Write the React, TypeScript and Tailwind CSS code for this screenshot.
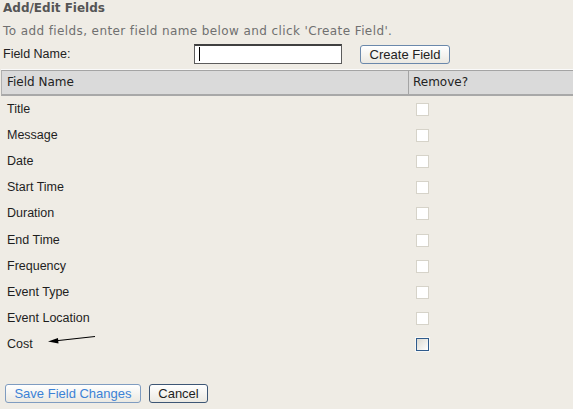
import React from "react";

const fields = [
  "Title",
  "Message",
  "Date",
  "Start Time",
  "Duration",
  "End Time",
  "Frequency",
  "Event Type",
  "Event Location",
  "Cost",
];

const arial = { fontFamily: '"Liberation Sans", Arial, sans-serif' };
const verdana = { fontFamily: '"DejaVu Sans", Verdana, sans-serif' };

function Checkbox({ active }: { active?: boolean }) {
  if (active) {
    return (
      <div className="w-[13px] h-[13px] border border-[#2f5b8c] bg-gradient-to-br from-[#dcdad2] to-white shadow-[0_0_0_1px_#f8f8f6]" />
    );
  }
  return <div className="w-[13px] h-[13px] border border-[#d6d3c9] bg-white" />;
}

export default function App() {
  return (
    <div className="relative w-[573px] h-[409px] bg-[#efece5] overflow-hidden">
      <div className="pl-[3px] pt-0">
        <div
          className="h-[17px] leading-[17px] text-[12px] font-bold text-[#555555]"
          style={verdana}
        >
          Add/Edit Fields
        </div>
        <div
          className="mt-[6px] h-[17px] leading-[17px] text-[12px] tracking-[0.4px] text-[#707070]"
          style={verdana}
        >
          To add fields, enter field name below and click 'Create Field'.
        </div>
      </div>
      <div className="flex items-center mt-[4px] h-[20px]">
        <div className="w-[194px] pl-[3px] text-[12.5px] text-[#222]" style={arial}>
          Field Name:
        </div>
        <div className="relative w-[148px] h-[20px] bg-white border border-[#5c5c5c] border-t-2 border-t-[#404040]">
          <div className="absolute left-[4px] top-[1px] w-[1px] h-[14px] bg-black" />
        </div>
        <button
          className="ml-[18px] w-[90px] h-[19px] mt-[1px] rounded-[3px] border border-[#6a88ab] bg-gradient-to-b from-white to-[#ebe9e2] text-[13px] leading-[17px] text-[#222]"
          style={arial}
        >
          Create Field
        </button>
      </div>
      <div className="mt-[6px] ml-[1px]">
        <div className="flex h-[26px] bg-[#dadada] border-t border-t-[#a4a4a4] border-b-2 border-b-[#a8a8a8] border-l border-l-[#b0b0b0] shadow-[0_-1px_0_#fafafa]">
          <div
            className="w-[407px] pl-[5px] text-[12px] leading-[23px] text-[#222] border-r border-r-[#a4a4a4]"
            style={verdana}
          >
            Field Name
          </div>
          <div className="pl-[4px] text-[12px] leading-[23px] text-[#222]" style={verdana}>
            Remove?
          </div>
        </div>
        {fields.map((f, i) => (
          <div key={f} className="flex items-center h-[26.2px]">
            <div className="w-[408px] pl-[6px] text-[12.5px] text-[#1e1e1e]" style={arial}>
              {f}
            </div>
            <div className="pl-[7px] flex items-center">
              <Checkbox active={i === fields.length - 1} />
            </div>
          </div>
        ))}
      </div>
      <div className="flex gap-[8px] ml-[5px] mt-[26px]">
        <button
          className="w-[136px] h-[19px] rounded-[3px] border border-[#7f9cc0] bg-gradient-to-b from-white to-[#ebe9e2] text-[13px] leading-[17px] text-[#3c82d6]"
          style={arial}
        >
          Save Field Changes
        </button>
        <button
          className="w-[59px] h-[19px] rounded-[3px] border border-[#3d5675] bg-gradient-to-b from-white to-[#ebe9e2] text-[13px] leading-[17px] text-[#1e1e1e]"
          style={arial}
        >
          Cancel
        </button>
      </div>
      <svg className="absolute left-0 top-0" width="573" height="409" style={{ pointerEvents: "none" }}>
        <line x1="95" y1="336.5" x2="54" y2="341" stroke="#000" strokeWidth="1.2" />
        <polygon points="48,341.5 58,338 58.5,343.5" fill="#000" />
      </svg>
    </div>
  );
}
